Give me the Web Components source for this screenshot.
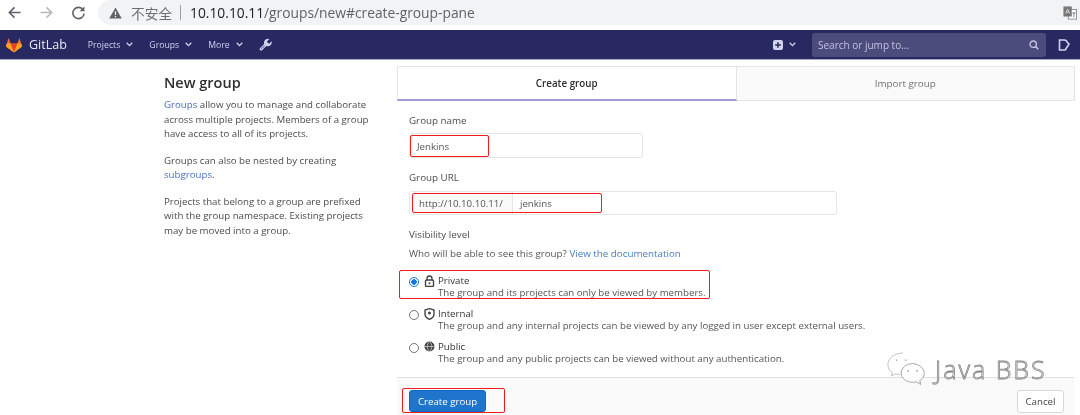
<!DOCTYPE html>
<html><head><meta charset="utf-8"><style>
html,body{margin:0;padding:0;background:#fff;overflow:hidden}
body{width:1080px;height:415px;font-family:"Open Sans","Noto Sans CJK SC",sans-serif;color:#2e2e2e;filter:blur(.3px)}
</style></head><body>
<browser-bar></browser-bar>
<gl-nav></gl-nav>
<group-page></group-page>
<wechat-mark></wechat-mark>
<script>
const chev='<svg width="7" height="5" viewBox="0 0 7 5"><path d="M.7.800L3.500 3.600 6.300.8" fill="none" stroke="#d1d1f0" stroke-width="1.300"/></svg>';
function def(name,html){customElements.define(name,class extends HTMLElement{constructor(){super();this.attachShadow({mode:'open'}).innerHTML=html}})}
def('browser-bar',`<style>
:host{display:flex;align-items:center;height:25px;margin-bottom:5px;background:#fff;box-sizing:border-box;padding-left:7px}
svg{display:block;flex:none}
.nav{display:flex;gap:17px;align-items:center;width:91px}
.omni{flex:1;height:25px;background:#f1f3f4;border-radius:13px 0 0 13px;display:flex;align-items:center;padding-left:11px;font-size:13.800px;color:#5f6368;white-space:nowrap}
.warn{margin-right:9px}.ns{font-family:"Noto Sans CJK SC",sans-serif;font-size:13.700px;color:#6b6f73}
.sep{width:1px;height:15px;background:#9aa0a6;margin:0 9px 0 8px}.host{color:#202124}
.tr{margin-left:auto;margin-right:3px}
</style><div class="nav">
<svg width="15" height="15" viewBox="0 0 16 16"><path d="M14.500 8H2.500M8 2.500L2.500 8 8 13.500" fill="none" stroke="#5f6368" stroke-width="1.700"/></svg>
<svg width="15" height="15" viewBox="0 0 16 16"><path d="M1.500 8h12M8 2.500L13.500 8 8 13.500" fill="none" stroke="#b6b9bc" stroke-width="1.700"/></svg>
<svg width="15" height="15" viewBox="0 0 16 16"><path d="M13 5.200A6 6 0 1 0 14 9" fill="none" stroke="#5f6368" stroke-width="1.700"/><path d="M14.300 1.500v5.200H9.100z" fill="#5f6368"/></svg>
</div><div class="omni">
<svg class="warn" width="13" height="12" viewBox="0 0 14 13"><path d="M7 .5L13.800 12.500H.2z" fill="#5f6368"/><path d="M6.300 4.500h1.400v4.300H6.300zM6.300 9.700h1.400v1.400H6.300z" fill="#f1f3f4"/></svg>
<span class="ns">不安全</span><span class="sep"></span><span><span class="host">10.10.10.11</span>/groups/new#create-group-pane</span>
<svg class="tr" width="14" height="14" viewBox="0 0 16 16"><rect x="6" y="4" width="9.500" height="11" fill="#fff" stroke="#888"/><rect x=".5" y=".5" width="9.500" height="11.500" fill="#777"/><path d="M3 8.500l2.300-5 2.300 5M3.800 7h3" fill="none" stroke="#ddd"/><path d="M10.500 8h4M12.500 7v6" stroke="#777"/></svg>
</div>`);
def('gl-nav',`<style>
:host{display:flex;align-items:center;height:30px;background:#292961;border-bottom:1px solid #a9a9cc;color:#d1d1f0;font-size:8.700px;font-weight:500;box-sizing:border-box;padding-left:5px}
svg{display:block;flex:none}
.logo{display:flex;align-items:center;gap:6px;color:#e8e8f5;font-size:12.500px;font-weight:400;margin-right:21px}
.item{display:flex;align-items:center;gap:6px;margin-right:16px}
.search{width:234px;height:24px;background:#4c4c7c;border-radius:3px;display:flex;align-items:center;justify-content:space-between;padding:0 7px 0 6px;box-sizing:border-box;margin:0 12px 0 16px;color:#c3c3e3;font-size:10px;font-weight:400}
.add{margin-left:auto;display:flex;gap:6px;align-items:center}
.todo{margin:0 10px 0 0}
</style>
<div class="logo"><svg width="18" height="16" viewBox="0 0 18 17"><path d="M9 16.500L.4 10.200l1-3.200L3.300 1l2 6h7.400l2-6 1.900 6 1 3.200z" fill="#fc6d26"/><path d="M9 16.500L5.300 7h7.400z" fill="#e24329"/><path d="M9 16.500L.4 10.200 1.400 7h3.900z" fill="#fca326"/><path d="M9 16.500l8.600-6.300-1-3.200h-3.900z" fill="#fca326"/></svg>GitLab</div>
<div class="item">Projects ${chev}</div>
<div class="item">Groups ${chev}</div>
<div class="item">More ${chev}</div>
<svg width="13" height="13" viewBox="0 0 13 13"><path d="M12.600 3.200L10.400 5.400 8.600 5 8.200 3.200 10.400 1A4 4 0 0 0 5.200 5.900L1 10.200A1.300 1.300 0 0 0 1 12L1.400 12.300A1.300 1.300 0 0 0 3.100 12.200L7.300 8A4 4 0 0 0 12.600 3.200z" fill="#d1d1f0"/><path d="M2.300 10.900L5.600 7.600" stroke="#292961" stroke-width=".8"/></svg>
<div class="add"><svg width="10" height="10" viewBox="0 0 10 10"><rect width="10" height="10" rx="2" fill="#d1d1f0"/><path d="M5 2.200v5.600M2.200 5h5.600" stroke="#292961" stroke-width="1.500"/></svg>${chev}</div>
<div class="search"><span>Search or jump to...</span><svg width="10" height="10" viewBox="0 0 10 10"><circle cx="4.200" cy="4.200" r="3.200" fill="none" stroke="#c3c3e3" stroke-width="1.400"/><path d="M6.600 6.600L9.300 9.300" stroke="#c3c3e3" stroke-width="1.500"/></svg></div>
<svg class="todo" width="12" height="12" viewBox="0 0 12 12"><path d="M1.500 1h4.700a3 3 0 0 1 3 2.400L11 5 7.500 10.500a1 1 0 0 1-1 .5H1.500z" fill="none" stroke="#d1d1f0" stroke-width="1.600"/></svg>`);
def('side-info',`<style>
:host{display:block;width:233px;box-sizing:border-box;padding:7px 20px 0 0;font-size:9.700px;line-height:14.700px;color:#4b4b4b}
h1{font-size:14.500px;font-weight:600;line-height:20px;margin:0 0 5px;color:#303030}
p{margin:0 0 11.500px}a{color:#4a6fc0;text-decoration:none}
</style><h1>New group</h1>
<p><a>Groups</a> allow you to manage and collaborate across multiple projects. Members of a group have access to all of its projects.</p>
<p>Groups can also be nested by creating <a>subgroups</a>.</p>
<p>Projects that belong to a group are prefixed with the group namespace. Existing projects may be moved into a group.</p>`);
def('tab-bar',`<style>
:host{display:flex;height:35px;font-size:9.800px;font-weight:600}
div{flex:1;display:flex;align-items:center;justify-content:center;box-sizing:border-box}
.on{background:#fff;border:1px solid #e5e5e5;border-bottom:2px solid #9e9ad6;color:#2e2e2e}
.off{background:#fafafa;border:1px solid #e5e5e5;border-left:0;color:#707070;font-weight:400}
</style><div class="on">Create group</div><div class="off">Import group</div>`);
def('red-box',`<style>:host{position:absolute;border:1px solid #f01c1c;border-radius:2px;box-sizing:border-box;pointer-events:none}</style>`);
def('vis-option',`<style>
:host{display:grid;grid-template-columns:15px 14px 1fr;font-size:9.700px;line-height:12px;color:#555;margin-bottom:9px}
.r{width:10px;height:10px;border:1px solid #767676;border-radius:50%;margin-top:2px;box-sizing:border-box;background:#fff}
:host([checked]) .r{border:1.500px solid #1a73e8;background:radial-gradient(circle,#1a73e8 0 2.500px,#fff 3px)}
.i{display:flex;justify-content:flex-start}.t{color:#333;white-space:nowrap}.d{grid-column:3;white-space:nowrap}
</style><span class="r"></span><span class="i"><slot name="icon"></slot></span><span class="t"><slot name="title"></slot></span><span class="d"><slot></slot></span>`);
def('group-form',`<style>
:host{display:block;width:678px;position:relative;height:349px;font-size:9.700px;color:#2e2e2e}
label{display:block;color:#4b4b4b;font-size:9.800px;line-height:14px;padding-top:1px}
.in{box-sizing:border-box;border:1px solid #e5e5e5;border-radius:3px;display:flex;align-items:center;color:#555}
.body{padding:12px 0 0 12px}
.name{width:234px;height:25px;padding:2px 0 0 7px;margin:5px 0 12px}
.url{width:428px;height:24px;margin:6px 0 12px}
.pre{background:#fafafa;border-right:1px solid #e5e5e5;height:100%;display:flex;align-items:center;padding:0 9px;color:#555}
.url span:last-child{padding-left:7px}
.who{margin:5px 0 14px;color:#555;line-height:14px;font-size:9.800px}a{color:#4a7cc0}
.foot{position:absolute;left:0;right:1px;top:311px;height:38px;box-sizing:border-box;background:#fafafa;border-top:1px solid #e0e0e0;display:flex;justify-content:space-between;padding:12px 10px 0 12px;align-items:flex-start}
.btn{box-sizing:border-box;border-radius:3px;display:flex;align-items:center;justify-content:center}
.pri{width:77px;height:22px;background:#1f75cb;color:#fff;border:1px solid #1068bf}
.sec{width:47px;height:23px;background:#fff;border:1px solid #d8d8d8;color:#444}
</style><tab-bar></tab-bar><div class="body">
<label>Group name</label><div class="in name">Jenkins</div>
<label>Group URL</label><div class="in url"><span class="pre">http://10.10.10.11/</span><span>jenkins</span></div>
<label>Visibility level</label><div class="who">Who will be able to see this group? <a>View the documentation</a></div>
<div>
<vis-option checked><svg slot="icon" width="11" height="12" viewBox="0 0 11 12"><path d="M3 5.500V3.500a2.500 2.500 0 0 1 5 0v2" fill="none" stroke="#444" stroke-width="1.300"/><rect x="1.500" y="5" width="8" height="6.500" rx="1" fill="none" stroke="#444" stroke-width="1.400"/><circle cx="5.500" cy="8.200" r="1" fill="#444"/></svg><span slot="title">Private</span>The group and its projects can only be viewed by members.</vis-option>
<vis-option><svg slot="icon" width="11" height="12" viewBox="0 0 11 12"><path d="M5.500 .7L10 2v4c0 2.700-2 4.400-4.500 5.300C3 10.400 1 8.700 1 6V2z" fill="none" stroke="#444" stroke-width="1.400"/><circle cx="5.500" cy="5" r="1.500" fill="#444"/></svg><span slot="title">Internal</span>The group and any internal projects can be viewed by any logged in user except external users.</vis-option>
<vis-option><svg slot="icon" width="11" height="11" viewBox="0 0 11 11"><circle cx="5.500" cy="5.500" r="5" fill="#444"/><path d="M.5 5.500h10M5.500.5c-3 3-3 7 0 10M5.500.5c3 3 3 7 0 10" fill="none" stroke="#ddd" stroke-width=".7"/></svg><span slot="title">Public</span>The group and any public projects can be viewed without any authentication.</vis-option>
</div></div>
<div class="foot"><div class="btn pri">Create group</div><div class="btn sec">Cancel</div></div>
<red-box style="left:13px;top:69px;width:79px;height:22px"></red-box>
<red-box style="left:15px;top:127px;width:190px;height:20px"></red-box>
<red-box style="left:2px;top:204px;width:311px;height:29px"></red-box>
<red-box style="left:5px;top:322px;width:103px;height:25px"></red-box>`);
def('group-page',`<style>:host{display:flex;padding:6px 0 0 164px}</style><side-info></side-info><group-form></group-form>`);
def('wechat-mark',`<style>
:host{position:absolute;left:887px;top:352px;display:flex;align-items:center;gap:9px;font-size:25px;color:#fff;letter-spacing:2px;-webkit-text-stroke:.8px #858585;white-space:nowrap;font-family:"Open Sans",sans-serif;font-weight:300}
</style><svg width="39" height="34" viewBox="0 0 44 38"><path d="M18 1C9 1 1 6.500 1 14c0 4 2 7 5 9l-1 4 5-2.500c2 .6 3.500.8 5 .7" fill="rgba(255,255,255,.75)" stroke="#bbb"/><path d="M29 13c-7 0-13 4.500-13 10.500S22 34 29 34c1.500 0 3-.2 4-.6l5 3.100-1-4.500c3-2 5-4.500 5-8 0-5.500-6-11-13-11z" fill="rgba(255,255,255,.85)" stroke="#999"/><circle cx="24" cy="21" r="1" fill="#999"/><circle cx="34" cy="21" r="1" fill="#999"/><circle cx="11" cy="9" r="1" fill="#bbb"/><circle cx="21" cy="9" r="1" fill="#bbb"/></svg><span>Java BBS</span>`);
</script></body></html>
